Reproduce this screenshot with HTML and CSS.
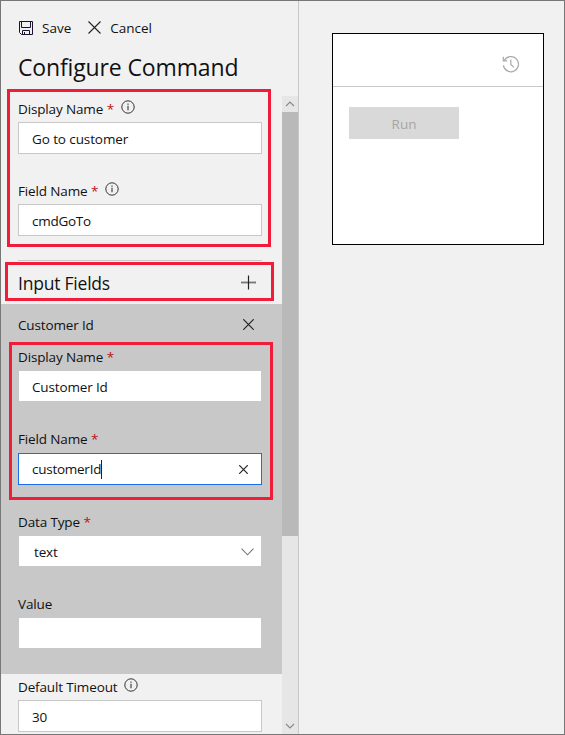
FILE: index.html
```html
<!DOCTYPE html>
<html lang="en">
<head>
<meta charset="utf-8">
<title>Configure Command</title>
<link rel="stylesheet" href="styles.css">
</head>
<body>
<svg class="defs" width="0" height="0">
  <symbol id="info" viewBox="0 0 14 14"><circle cx="7" cy="7" r="6.2" fill="none" stroke="#333" stroke-width="1"/><path d="M7 5.8V10.2M7 3.6V4.8" stroke="#333" stroke-width="1.1"/></symbol>
</svg>
<div class="window">
  <section class="panel">
    <div class="toolbar">
      <button class="command"><svg width="14" height="14" viewBox="0 0 14 14" fill="none" stroke="#1c1230"><path d="M.5.5H13.5V13.5H2.5L.5 11.5Z"/><path d="M2.5.5V6.5H11.5V.5M3.5 13.5V9.5H10.5V13.5M5.5 11V13.5"/></svg><span>Save</span></button>
      <button class="command"><svg width="13" height="13" viewBox="0 0 13 13" fill="none" stroke="#222" stroke-width="1.1"><path d="M.5.5L12.5 12.5M12.5.5L.5 12.5"/></svg><span>Cancel</span></button>
    </div>
    <h1>Configure Command</h1>
    <div class="scroller">
      <div class="content">
        <div class="field"><label><span>Display Name</span><b>*</b><svg class="info"><use href="#info"/></svg></label><div class="input"><span class="wide">Go to customer</span></div></div>
        <div class="field"><label><span>Field Name</span><b>*</b><svg class="info"><use href="#info"/></svg></label><div class="input"><span class="tight">cmdGoTo</span></div></div>
        <hr>
        <div class="section-head"><h2>Input Fields</h2><svg width="15" height="15" viewBox="0 0 15 15"><path d="M0 7.5H15" stroke="#777" stroke-width="1.8"/><path d="M7.5.5V14.5" stroke="#222" stroke-width="1.2"/></svg></div>
        <div class="group">
          <div class="group-head"><span>Customer Id</span><svg width="11" height="11" viewBox="0 0 11 11"><path d="M.3.3L10.7 10.7M10.7.3L.3 10.7" stroke="#222" stroke-width="1.2"/></svg></div>
          <div class="field"><label><span>Display Name</span><b>*</b></label><div class="input plain"><span>Customer Id</span></div></div>
          <div class="field"><label class="tall"><span>Field Name</span><b>*</b></label><div class="input focused"><span class="tight">customerId</span><i class="caret"></i><svg class="clear" width="9" height="9" viewBox="0 0 9 9"><path d="M.2.2L8.8 8.8M8.8.2L.2 8.8" stroke="#222" stroke-width="1.2"/></svg></div></div>
          <div class="field"><label><span>Data Type</span><b>*</b></label><div class="input plain select"><span>text</span><svg class="chevron" width="13" height="8" viewBox="0 0 13 8"><path d="M.5.7L6.5 6.8L12.5.7" fill="none" stroke="#777" stroke-width="1.1"/></svg></div></div>
          <div class="field"><label><span>Value</span></label><div class="input plain"></div></div>
        </div>
        <div class="field"><label><span>Default Timeout</span><svg class="info"><use href="#info"/></svg></label><div class="input"><span>30</span></div></div>
      </div>
      <div class="scrollbar">
        <svg width="16" height="16" viewBox="0 0 16 16"><path d="M4 10L8 6L12 10" fill="none" stroke="#888" stroke-width="1.1"/></svg>
        <div class="thumb"></div>
        <svg width="16" height="16" viewBox="0 0 16 16"><path d="M4 6L8 10L12 6" fill="none" stroke="#888" stroke-width="1.1"/></svg>
      </div>
    </div>
  </section>
  <main class="preview">
    <div class="card">
      <div class="card-head"><svg width="18" height="18" viewBox="0 0 18 18" fill="none" stroke="#a9a9a9" stroke-width="1.2"><path d="M2.2 5.6A7.6 7.6 0 1 1 1.4 10.3"/><path d="M1.3 1.8V5.8H5.2M8.8 4.6V9.4L12 12.4"/></svg></div>
      <button class="run">Run</button>
    </div>
  </main>
  <div class="mark mark-command"></div>
  <div class="mark mark-section"></div>
  <div class="mark mark-field"></div>
</div>
</body>
</html>
```
FILE: styles.css
```css
* { box-sizing: border-box; }
body { margin: 0; font: 13.5px/18px "Open Sans", "Noto Sans", sans-serif; letter-spacing: -0.14px; color: #111; }
.defs { position: absolute; }
.window { position: relative; display: flex; width: 565px; height: 735px; border: 1px solid #777; background: #f1f1f1; overflow: hidden; }
.panel { width: 298px; flex: none; display: flex; flex-direction: column; border-right: 1px solid #c8c8c8; }
button { border: 0; padding: 0; background: none; font: inherit; letter-spacing: 0; color: inherit; }
.toolbar { display: flex; gap: 17px; height: 50px; padding: 3px 0 0 18px; align-items: center; }
.command { display: flex; align-items: center; gap: 9px; }
h1 { margin: 0; height: 45px; padding-left: 17px; font-size: 23px; line-height: 32px; font-weight: 400; }
.scroller { display: flex; height: 638px; }
.content { width: 281px; }
.field { padding: 0 20px 0 17px; margin-bottom: 24px; }
label { display: flex; height: 26px; padding-top: 4px; }
.tall { height: 27px; }
b { color: #b11; font-weight: 400; margin-left: 3.5px; }
.info { width: 14px; height: 14px; margin: 0 0 0 7px; }
.input { display: flex; align-items: center; height: 32px; padding: 2px 0 0 13px; border: 1px solid #c8c8c8; background: #fff; }
.focused { border-color: #1a6fef; padding-top: 0; }
.tight { letter-spacing: -0.26px; }
.wide { letter-spacing: -0.1px; }
.caret { width: 1px; height: 19px; background: #222; }
.clear { margin-left: auto; margin-right: 13px; }
.select { padding-left: 15px; }
.chevron { margin-left: auto; margin-right: 7px; }
hr { height: 1px; margin: 0 20px 0 17px; border: 0; background: #c8c8c8; }
.section-head { display: flex; align-items: center; justify-content: space-between; height: 43px; padding: 0 26px 0 17px; }
h2 { margin: 0; font-size: 17.5px; font-weight: 400; line-height: 24px; letter-spacing: -0.22px; }
.group { height: 370px; background: #c8c8c8; }
.group-head { display: flex; align-items: center; justify-content: space-between; height: 40px; padding: 1px 28px 0 17px; }
.scrollbar { width: 16px; display: flex; flex-direction: column; background: #e6e6e6; }
.scrollbar svg { display: block; }
.thumb { height: 424px; background: #b9b9b9; margin-bottom: auto; }
.preview { padding: 32px 0 0 33px; }
.card { width: 212px; height: 212px; border: 1px solid #000; background: #fff; }
.card-head { height: 53px; border-bottom: 1px solid #c8c8c8; padding: 21px 0 0 169px; }
.run { display: block; width: 110px; height: 32px; margin: 20px 0 0 16px; padding-top: 2px; background: #d9d9d9; color: #a6a6a6; }
.mark { position: absolute; border: 3px solid #f01c3a; }
.mark-command { left: 6px; top: 88px; width: 264px; height: 158px; }
.mark-section { left: 4px; top: 261px; width: 269px; height: 39px; }
.mark-field { left: 8px; top: 341px; width: 264px; height: 158px; }
```
